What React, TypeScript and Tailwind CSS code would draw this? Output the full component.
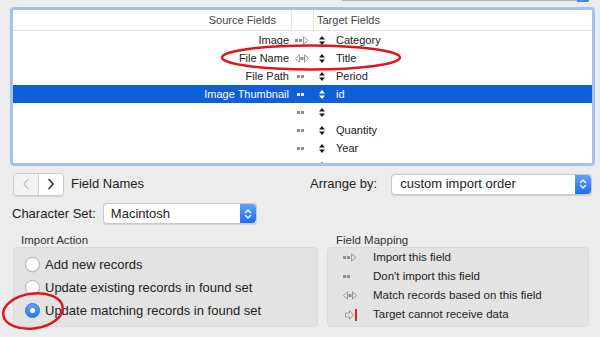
import React from "react";

type IconKind = "import" | "match" | "none" | "block";

function MapIcon({ kind, light }: { kind: IconKind; light?: boolean }) {
  const c = light ? "#dfe9fb" : "#8e8e8e";
  const tri = light ? "#e8effc" : "#9a9a9a";
  if (kind === "none") {
    return (
      <svg width="14" height="9" viewBox="0 0 14 9">
        <rect x="2" y="3" width="3" height="3" fill={c} />
        <rect x="6" y="3" width="3" height="3" fill={c} />
      </svg>
    );
  }
  if (kind === "import") {
    return (
      <svg width="14" height="9" viewBox="0 0 14 9">
        <rect x="0" y="3" width="3" height="3" fill={c} />
        <rect x="4" y="3" width="3" height="3" fill={c} />
        <path d="M8.5 0.8 L13 4.5 L8.5 8.2 Z" fill="none" stroke={tri} strokeWidth="1" />
      </svg>
    );
  }
  if (kind === "match") {
    return (
      <svg width="14" height="9" viewBox="0 0 14 9">
        <path d="M4.5 0.8 L0.5 4.5 L4.5 8.2 Z" fill="none" stroke={tri} strokeWidth="1" />
        <rect x="5.5" y="3" width="3" height="3" fill={c} />
        <path d="M9.5 0.8 L13.5 4.5 L9.5 8.2 Z" fill="none" stroke={tri} strokeWidth="1" />
      </svg>
    );
  }
  return (
    <svg width="14" height="12" viewBox="0 0 14 12">
      <path d="M1.5 4 L5.5 4 L5.5 1.5 L9.5 6 L5.5 10.5 L5.5 8 L1.5 8 Z" fill="none" stroke="#9a9a9a" strokeWidth="1" />
      <rect x="11" y="0" width="2" height="12" fill="#e0202a" />
    </svg>
  );
}

function UpDown({ light }: { light?: boolean }) {
  const c = light ? "#ffffff" : "#1a1a1a";
  return (
    <svg width="6" height="9" viewBox="0 0 6 9">
      <path d="M3 0 L6 3.6 L0 3.6 Z" fill={c} />
      <path d="M3 9 L6 5.4 L0 5.4 Z" fill={c} />
    </svg>
  );
}

function Stepper() {
  return (
    <div className="w-[16px] self-stretch rounded-r-[4px] bg-gradient-to-b from-[#5da3f8] to-[#1c6cef] flex items-center justify-center">
      <svg width="8" height="12" viewBox="0 0 8 12">
        <path d="M1.5 4.5 L4 2 L6.5 4.5" fill="none" stroke="#fff" strokeWidth="1.4" strokeLinecap="round" strokeLinejoin="round" />
        <path d="M1.5 7.5 L4 10 L6.5 7.5" fill="none" stroke="#fff" strokeWidth="1.4" strokeLinecap="round" strokeLinejoin="round" />
      </svg>
    </div>
  );
}

type Row = { src: string; icon: IconKind; tgt: string; sel?: boolean };

const rows: Row[] = [
  { src: "Image", icon: "import", tgt: "Category" },
  { src: "File Name", icon: "match", tgt: "Title" },
  { src: "File Path", icon: "none", tgt: "Period" },
  { src: "Image Thumbnail", icon: "none", tgt: "id", sel: true },
  { src: "", icon: "none", tgt: "" },
  { src: "", icon: "none", tgt: "Quantity" },
  { src: "", icon: "none", tgt: "Year" },
  { src: "", icon: "none", tgt: "" },
];

const legend: { icon: IconKind; label: string }[] = [
  { icon: "import", label: "Import this field" },
  { icon: "none", label: "Don't import this field" },
  { icon: "match", label: "Match records based on this field" },
  { icon: "block", label: "Target cannot receive data" },
];

function Radio({ on }: { on?: boolean }) {
  if (on) {
    return (
      <div className="w-[15px] h-[15px] rounded-full bg-gradient-to-b from-[#5ba2f8] to-[#2a79f0] border border-[#2f72d8] flex items-center justify-center">
        <div className="w-[5px] h-[5px] rounded-full bg-white" />
      </div>
    );
  }
  return <div className="w-[15px] h-[15px] rounded-full bg-white border border-[#b3b3b3] shadow-[0_0.5px_1px_rgba(0,0,0,0.12)]" />;
}

export default function App() {
  return (
    <div className="w-[600px] h-[337px] bg-[#ececec] relative overflow-hidden text-[#222] font-['Liberation_Sans',Arial,sans-serif]">
      {/* top strip */}
      <div className="h-[7px] flex items-start pl-[342px]">
        <div className="w-[235px] h-px bg-[#b2b2b2]" />
        <div className="w-[12px] h-[2px] bg-[#4a86e8]" />
      </div>

      {/* table */}
      <div className="ml-[10px] w-[585px] h-[159px] border-[3px] border-[#a3c3ee] rounded-[4px] bg-white overflow-hidden">
        <div className="flex h-[21px] border-b border-[#e3e3e3] text-[11px] text-[#444] items-center">
          <div className="w-[279px] h-full flex items-center justify-end pr-[15px] border-r border-[#e6e6e6]">Source Fields</div>
          <div className="w-[22px] h-full border-r border-[#e6e6e6]" />
          <div className="pl-[3px]">Target Fields</div>
        </div>
        {rows.map((r, i) => (
          <div
            key={i}
            className={
              "flex h-[18px] items-center text-[11px] " +
              (r.sel ? "bg-[#0f5fd7] text-white" : "text-[#222]")
            }
          >
            <div className="w-[276px] text-right whitespace-nowrap">{r.src}</div>
            <div className="w-[25px] pl-[6px] flex items-center">
              <MapIcon kind={r.icon} light={r.sel} />
            </div>
            <div className="w-[16px] flex justify-center">
              <UpDown light={r.sel} />
            </div>
            <div className="pl-[6px] whitespace-nowrap">{r.tgt}</div>
          </div>
        ))}
      </div>

      {/* nav row */}
      <div className="mt-[6px] h-[24px] flex items-center text-[13px]">
        <div className="ml-[13px] w-[297px] flex items-center">
          <div className="flex h-[23px] rounded-[4px] border border-[#cdcdcd] overflow-hidden shadow-[0_0.5px_1px_rgba(0,0,0,0.1)]">
            <div className="w-[25px] bg-[#f2f2f2] border-r border-[#d2d2d2] flex items-center justify-center">
              <svg width="8" height="12" viewBox="0 0 8 12">
                <path d="M6 1.5 L2 6 L6 10.5" fill="none" stroke="#c3c3c3" strokeWidth="1.5" strokeLinecap="round" strokeLinejoin="round" />
              </svg>
            </div>
            <div className="w-[24px] bg-white flex items-center justify-center">
              <svg width="8" height="12" viewBox="0 0 8 12">
                <path d="M2 1.5 L6 6 L2 10.5" fill="none" stroke="#333" strokeWidth="1.6" strokeLinecap="round" strokeLinejoin="round" />
              </svg>
            </div>
          </div>
          <span className="ml-[7px]">Field Names</span>
        </div>
        <span>Arrange by:</span>
        <div className="ml-[14px] w-[201px] h-[21px] flex items-center bg-white border border-[#c8c8c8] rounded-[4px] shadow-[0_0.5px_1px_rgba(0,0,0,0.12)]">
          <span className="flex-1 pl-[8px]">custom import order</span>
          <Stepper />
        </div>
      </div>

      {/* character set */}
      <div className="mt-[7px] h-[21px] flex items-center text-[13px] pl-[12px]">
        <span>Character Set:</span>
        <div className="ml-[7px] w-[154px] h-[21px] flex items-center bg-white border border-[#c8c8c8] rounded-[4px] shadow-[0_0.5px_1px_rgba(0,0,0,0.12)]">
          <span className="flex-1 pl-[7px]">Macintosh</span>
          <Stepper />
        </div>
      </div>

      {/* groups */}
      <div className="mt-[9px] flex pl-[13px] gap-[9px]">
        <div className="w-[305px] flex flex-col">
          <div className="h-[14px] pl-[8px] text-[11.5px] text-[#333] leading-[14px]">Import Action</div>
          <div className="h-[80px] bg-[#e3e3e3] border border-[#dadada] rounded-[4px] pt-[5px] pl-[11px] text-[13px]">
            {[
              { t: "Add new records" },
              { t: "Update existing records in found set" },
              { t: "Update matching records in found set", on: true },
            ].map((o, i) => (
              <div key={i} className="h-[23px] flex items-center gap-[5px]">
                <Radio on={o.on} />
                <span>{o.t}</span>
              </div>
            ))}
          </div>
        </div>
        <div className="w-[262px] flex flex-col">
          <div className="h-[14px] pl-[9px] text-[11.5px] text-[#333] leading-[14px]">Field Mapping</div>
          <div className="h-[80px] bg-[#e3e3e3] border border-[#dadada] rounded-[4px] pl-[15px] text-[11.5px]">
            {legend.map((l, i) => (
              <div key={i} className="h-[19px] flex items-center">
                <div className="w-[30px] flex items-center">
                  <div className={l.icon === "none" ? "-ml-[2px]" : l.icon === "block" ? "ml-[1px]" : ""}>
                    <MapIcon kind={l.icon} />
                  </div>
                </div>
                <span>{l.label}</span>
              </div>
            ))}
          </div>
        </div>
      </div>

      {/* annotations */}
      <svg className="absolute left-0 top-0 pointer-events-none" width="600" height="337" viewBox="0 0 600 337">
        <ellipse cx="311" cy="57.5" rx="89" ry="12" fill="none" stroke="#e0161c" strokeWidth="2.5" />
        <ellipse cx="33" cy="311" rx="30" ry="17.5" transform="rotate(-8 33 311)" fill="none" stroke="#e0161c" strokeWidth="2.5" />
      </svg>
    </div>
  );
}
